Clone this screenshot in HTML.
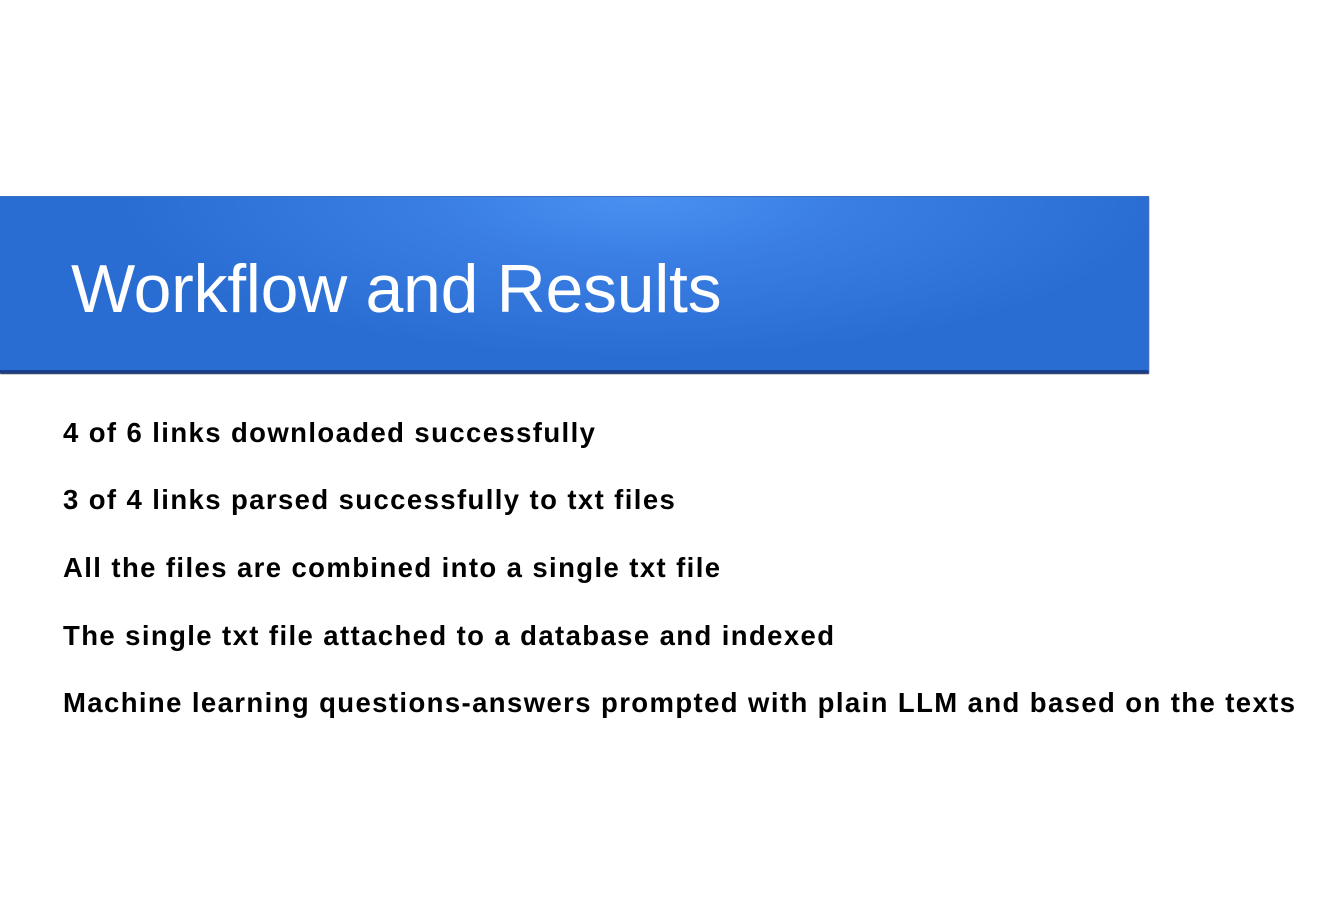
<!DOCTYPE html>
<html><head><meta charset="utf-8"><style>
html,body{margin:0;padding:0;background:#fff;width:1344px;height:904px;overflow:hidden;position:relative;font-family:"Liberation Sans",Arial,sans-serif}
.banner{position:absolute;left:0;top:196px;width:1148px;height:173px;
background:radial-gradient(ellipse 520px 160px at 640px 0px,#4a90f0 0%,#3a7ee4 40%,#2a6dd2 100%);
border-top:1px solid #3b6fc4;border-right:1px solid #3f6fc0;border-bottom:3px solid #1a3f8a;box-shadow:0 1px 1px #0a1a40}
.title{position:absolute;left:71px;top:250px;font-size:68px;color:#fff;white-space:nowrap;letter-spacing:-0.3px}
.l{position:absolute;left:63px;font-size:27.5px;font-weight:bold;color:#000;white-space:nowrap;letter-spacing:1.4px}
</style></head><body>
<div class="banner"></div>
<div class="title">Workflow and Results</div>
<div class="l" style="top:417px">4 of 6 links downloaded successfully</div>
<div class="l" style="top:484px">3 of 4 links parsed successfully to txt files</div>
<div class="l" style="top:552px">All the files are combined into a single txt file</div>
<div class="l" style="top:620px">The single txt file attached to a database and indexed</div>
<div class="l" style="top:687px">Machine learning questions-answers prompted with plain LLM and based on the texts</div>
</body></html>
